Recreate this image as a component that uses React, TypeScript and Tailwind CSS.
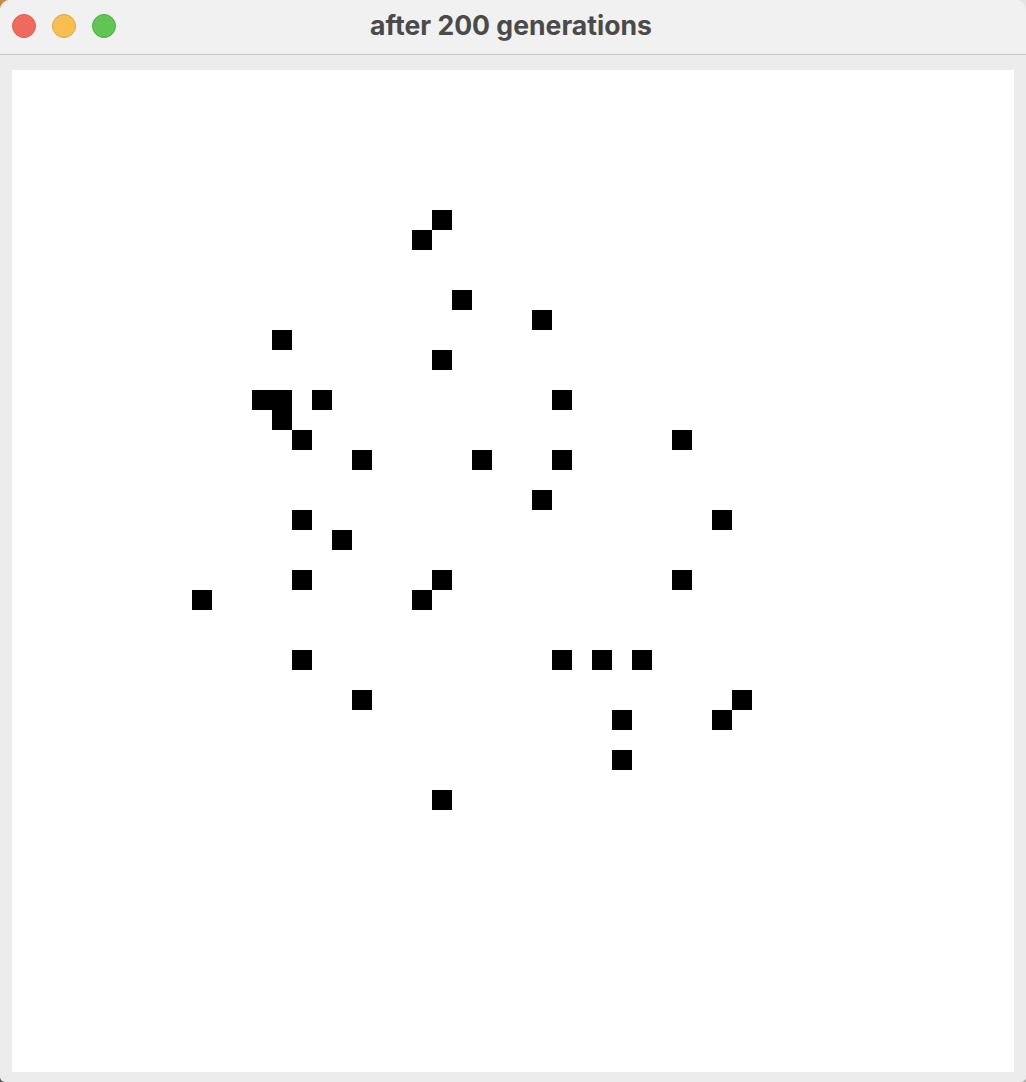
const cells = [
  [21, 7], [20, 8], [22, 11], [26, 12], [13, 13], [21, 14],
  [12, 16], [13, 16], [15, 16], [27, 16], [13, 17], [14, 18], [33, 18],
  [17, 19], [23, 19], [27, 19], [26, 21], [14, 22], [35, 22], [16, 23],
  [14, 25], [21, 25], [33, 25], [9, 26], [20, 26],
  [14, 29], [27, 29], [29, 29], [31, 29], [17, 31], [36, 31],
  [30, 32], [35, 32], [30, 34], [21, 36],
];

export default function App() {
  return (
    <div className="h-[1082px] w-[1026px] overflow-hidden bg-[conic-gradient(#e4e4e4_0_25%,#a8a8a8_25%_50%,#555555_50%_75%,#c98a45_75%)]">
      <div className="flex h-full flex-col overflow-hidden rounded-t-[10px] rounded-b-[5px] bg-[#ececec]">
        <div className="flex h-[55px] shrink-0 items-center border-b border-[#c6c6c6] bg-[#f1f1f1] pb-[3px]">
          <div className="flex gap-4 pl-3">
            <span className="h-6 w-6 rounded-full border border-[#de5d52] bg-[#ee6a5f]" />
            <span className="h-6 w-6 rounded-full border border-[#dfa63f] bg-[#f6bf50]" />
            <span className="h-6 w-6 rounded-full border border-[#52ad46] bg-[#61c554]" />
          </div>
          <div className="flex-1 pr-[120px] text-center font-['Inter',sans-serif] text-[26.6px] font-bold text-[#4a4a4a]">
            after 200 generations
          </div>
        </div>
        <div className="px-3 pt-[15px]">
          <div className="grid h-[1002px] w-[1002px] grid-cols-[repeat(50,20px)] grid-rows-[repeat(50,20px)] bg-white">
            {cells.map(([col, row]) => (
              <div
                key={`${col}-${row}`}
                className="bg-black"
                style={{ gridColumnStart: col + 1, gridRowStart: row + 1 }}
              />
            ))}
          </div>
        </div>
      </div>
    </div>
  );
}
